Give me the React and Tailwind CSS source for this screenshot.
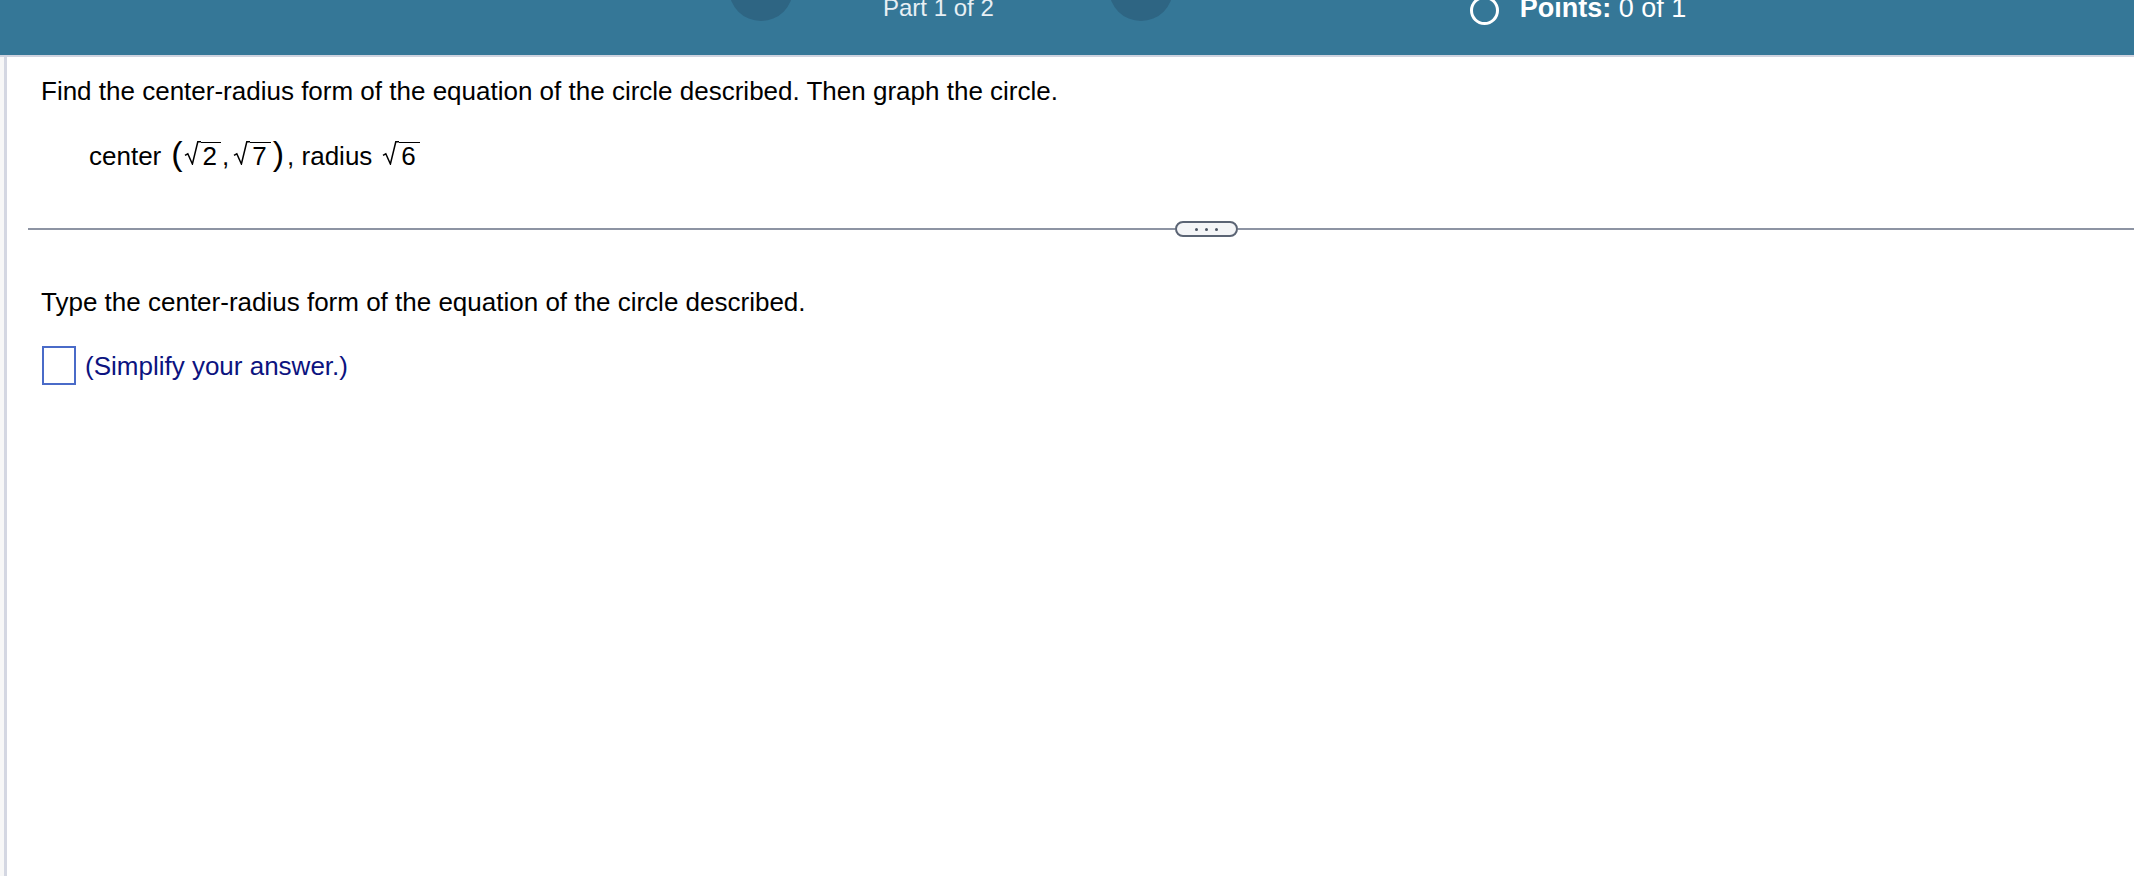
function Radical({ children }) {
    return (
        <span className="inline-flex items-baseline">
            <svg width="17" height="24" viewBox="0 0 17 24" className="shrink-0">
                <path d="M1 14.4 L3.8 12.8 L8.4 23 L13.8 0.8 L17 0.8" fill="none" stroke="#000" strokeWidth="1.5" strokeLinejoin="miter" />
            </svg>
            <span className="border-t-[1.5px] border-black leading-[26px] pl-[2px] pr-[4px]">{children}</span>
        </span>
    );
}

function Header() {
    return (
        <div className="h-[57px] bg-[#357797] border-b-2 border-[#cfd3df] overflow-hidden">
            <div className="flex items-start -mt-[43px] pl-[729px]">
                <div className="w-16 h-16 rounded-full bg-[#2e6583] shrink-0" />
                <span className="ml-[90px] mt-[39px] text-[24px] leading-none text-[#e8eff4] whitespace-nowrap">
                    Part 1 of 2
                </span>
                <div className="ml-[115px] w-16 h-16 rounded-full bg-[#2e6583] shrink-0" />
                <div className="ml-[297px] mt-[39px] w-[29px] h-[29px] rounded-full border-[3px] border-white shrink-0" />
                <span className="ml-[21px] mt-[38px] text-[27px] leading-none text-white whitespace-nowrap">
                    <span className="font-bold">Points:</span> 0 of 1
                </span>
            </div>
        </div>
    );
}

function App() {
    return (
        <div className="min-h-screen w-full bg-white font-['Liberation_Sans',Arial,sans-serif] text-black flex flex-col">
            <Header />

            <div className="flex flex-1 min-h-[819px]">
                <div className="w-[4px] bg-[#f7f7f7] shrink-0" />
                <div className="w-[3px] bg-[#d4d7e2] shrink-0" />

                <div className="flex-1 flex flex-col pl-[34px] overflow-hidden">
                    <div className="mt-[19px] text-[26px] leading-[30px] whitespace-nowrap">
                        Find the center-radius form of the equation of the circle described. Then graph the circle.
                    </div>

                    <div className="mt-[28px] ml-[48px] flex items-baseline text-[26px] leading-[30px] whitespace-nowrap">
                        <span>center</span>
                        <span className="ml-[10px] text-[34px] leading-[38px]">(</span>
                        <span className="ml-[1px]"><Radical>2</Radical></span>
                        <span className="ml-[1px] mr-[4px]">,</span>
                        <Radical>7</Radical>
                        <span className="ml-[2px] text-[34px] leading-[38px]">)</span>
                        <span className="ml-[3px]">, radius</span>
                        <span className="ml-[10px]"><Radical>6</Radical></span>
                    </div>

                    <div className="mt-[49px] -ml-[13px] flex items-center h-[16px]">
                        <div className="w-[1147px] h-[2px] bg-[#8d94a3] shrink-0" />
                        <div className="w-[63px] h-[16px] rounded-full border-2 border-[#5b6474] bg-[#f4f5f7] flex items-center justify-center gap-[7px] shrink-0">
                            <span className="w-[3px] h-[3px] rounded-full bg-[#4b5563]" />
                            <span className="w-[3px] h-[3px] rounded-full bg-[#4b5563]" />
                            <span className="w-[3px] h-[3px] rounded-full bg-[#4b5563]" />
                        </div>
                        <div className="flex-1 h-[2px] bg-[#8d94a3]" />
                    </div>

                    <div className="mt-[50px] text-[26px] leading-[30px] whitespace-nowrap">
                        Type the center-radius form of the equation of the circle described.
                    </div>

                    <div className="mt-[29px] ml-[1px] flex items-center">
                        <div className="w-[34px] h-[39px] border-2 border-[#4a6bc8] shrink-0" />
                        <span className="ml-[9px] text-[26px] leading-[30px] text-[#0c1380] whitespace-nowrap">
                            (Simplify your answer.)
                        </span>
                    </div>
                </div>
            </div>
        </div>
    );
}

export default App;
